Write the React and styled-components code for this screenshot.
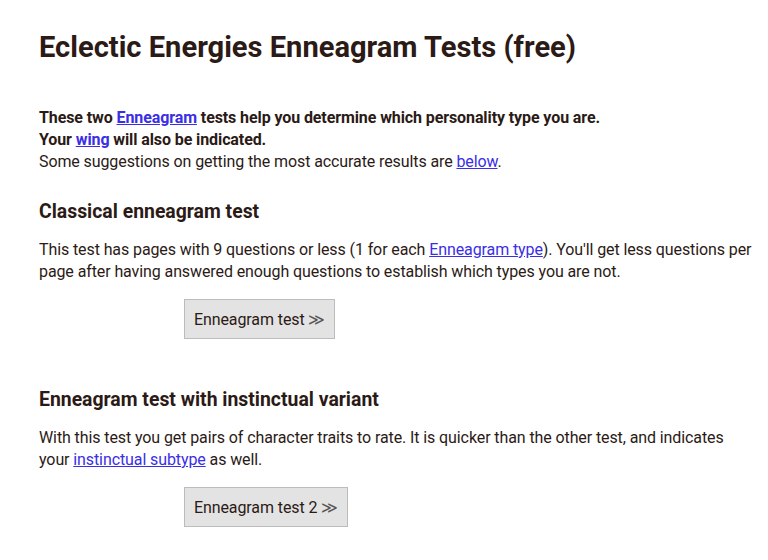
import React from 'react';
import styled, { createGlobalStyle } from 'styled-components';

const GlobalStyle = createGlobalStyle`
  body {
    margin: 0;
    background: #ffffff;
    font-family: Roboto, "Liberation Sans", sans-serif;
    color: #2b1a16;
  }
`;

const Page = styled.main`
  padding: 30px 14px 0 39px;
`;

const Title = styled.h1`
  margin: 0 0 43px;
  font-size: 29.1px;
  line-height: 34px;
  font-weight: 700;
`;

const Intro = styled.p`
  margin: 0 0 26px;
  font-size: 16px;
  line-height: 22px;
  letter-spacing: -0.1px;
`;

const Strong = styled.strong`
  font-weight: 700;
`;

const Link = styled.a`
  color: #3a2ee6;
  text-decoration: underline;
`;

const Section = styled.section`
  margin-bottom: 48px;
`;

const Heading = styled.h2`
  margin: 0 0 14px;
  font-size: 19.4px;
  line-height: 26px;
  font-weight: 700;
`;

const Text = styled.p`
  margin: 0 0 16px;
  font-size: 16px;
  line-height: 22px;
  letter-spacing: -0.1px;
`;

const ButtonRow = styled.div`
  padding-left: 145px;
`;

const TestButton = styled.button`
  height: 40px;
  padding: 0 9px;
  border: 1px solid #bcbcbc;
  background: #e3e3e3;
  color: #2b1a16;
  font-family: Roboto, "Liberation Sans", sans-serif;
  font-size: 16px;
  letter-spacing: -0.1px;
  cursor: pointer;
`;

const Arrows = styled.span`
  font-weight: 300;
  color: #555;
`;

export default function App() {
  return (
    <>
      <GlobalStyle />
      <Page>
        <Title>Eclectic Energies Enneagram Tests (free)</Title>
        <Intro>
          <Strong>
            These two <Link href="#">Enneagram</Link> tests help you determine which personality type you are.
            <br />
            Your <Link href="#">wing</Link> will also be indicated.
          </Strong>
          <br />
          Some suggestions on getting the most accurate results are <Link href="#">below</Link>.
        </Intro>

        <Section>
          <Heading>Classical enneagram test</Heading>
          <Text>
            This test has pages with 9 questions or less (1 for each <Link href="#">Enneagram type</Link>). You'll get less questions per page after having answered enough questions to establish which types you are not.
          </Text>
          <ButtonRow>
            <TestButton>Enneagram test <Arrows>≫</Arrows></TestButton>
          </ButtonRow>
        </Section>

        <Section>
          <Heading>Enneagram test with instinctual variant</Heading>
          <Text>
            With this test you get pairs of character traits to rate. It is quicker than the other test, and indicates your <Link href="#">instinctual subtype</Link> as well.
          </Text>
          <ButtonRow>
            <TestButton>Enneagram test 2 <Arrows>≫</Arrows></TestButton>
          </ButtonRow>
        </Section>
      </Page>
    </>
  );
}
